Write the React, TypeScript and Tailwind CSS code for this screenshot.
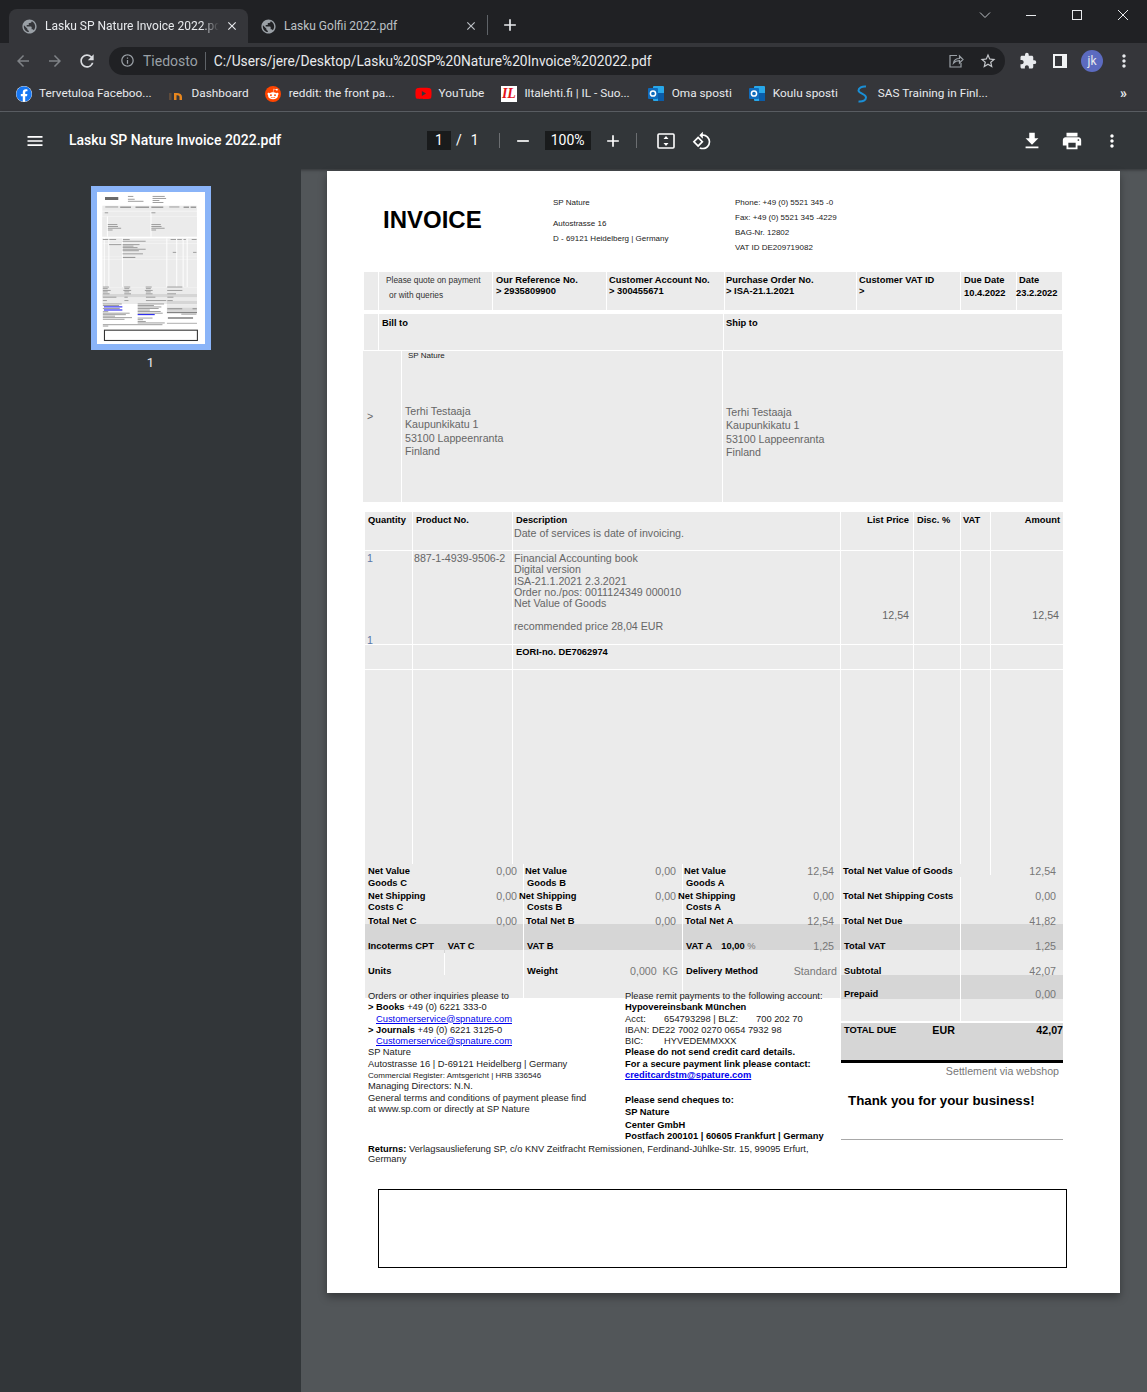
import React from 'react';
import {
  MdAdd,
  MdArrowBack,
  MdArrowForward,
  MdClose,
  MdExtension,
  MdFileDownload,
  MdInfoOutline,
  MdMenu,
  MdMoreVert,
  MdPrint,
  MdPublic,
  MdRefresh,
  MdRemove,
  MdRotate90DegreesCcw,
  MdStarBorder,
} from 'react-icons/md';
import { FaFacebook, FaRedditAlien, FaYoutube } from 'react-icons/fa';

const chromeFont = "font-['Roboto',sans-serif]";

function OutlookIcon() {
  return (
    <svg width="17" height="17" viewBox="0 0 17 17" className="shrink-0">
      <rect x="5" y="1" width="11" height="15" rx="1" fill="#28a8ea" />
      <rect x="10" y="8" width="6" height="8" fill="#0a5ca8" />
      <rect x="0" y="3" width="10" height="11" rx="1" fill="#0f6cbd" />
      <circle cx="5" cy="8.5" r="2.6" fill="none" stroke="#fff" strokeWidth="1.5" />
    </svg>
  );
}

function Bookmark({ icon, label, className = '' }: { icon: React.ReactNode; label: string; className?: string }) {
  return (
    <div className={`flex items-center gap-[7px] ${className}`}>
      <div className="flex h-4 w-[17px] shrink-0 items-center justify-center">{icon}</div>
      <span className="whitespace-nowrap text-[11.8px] text-[#e8eaed]">{label}</span>
    </div>
  );
}

function TitleBar() {
  return (
    <div className="flex h-[43px] items-end bg-[#202124] pl-[9px] text-[12px]">
      <div className="flex h-[34px] w-[239px] items-center rounded-t-lg bg-[#35363a] pl-[12px] pr-[9px]">
        <MdPublic className="shrink-0 text-[#9aa0a6]" size={17} />
        <span className="ml-[7px] w-[174px] overflow-hidden whitespace-nowrap text-[#e8eaed] [mask-image:linear-gradient(to_right,black_90%,transparent)]">
          Lasku SP Nature Invoice 2022.pdf
        </span>
        <MdClose className="ml-auto text-[#e8eaed]" size={14} />
      </div>
      <div className="flex h-[34px] w-[239px] items-center pl-[12px] pr-[9px]">
        <MdPublic className="shrink-0 text-[#9aa0a6]" size={17} />
        <span className="ml-[7px] whitespace-nowrap text-[#bdc1c6]">Lasku Golfii 2022.pdf</span>
        <MdClose className="ml-auto text-[#bdc1c6]" size={14} />
      </div>
      <div className="mb-[8px] h-[20px] w-px bg-[#5f6368]" />
      <MdAdd className="mb-[8px] ml-[12px] text-[#e8eaed]" size={20} />
      <div className="mb-auto ml-auto mt-[8px] flex items-center">
        <svg width="14" height="14" viewBox="0 0 14 14" className="mr-[32px] text-[#bdc1c6]" fill="none" stroke="currentColor">
          <path d="M2 4.5l5 5 5-5" />
        </svg>
        <svg width="14" height="14" viewBox="0 0 14 14" className="mr-[32px] text-[#e8eaed]" fill="none" stroke="currentColor">
          <path d="M2 7.5h10" />
        </svg>
        <svg width="14" height="14" viewBox="0 0 14 14" className="mr-[32px] text-[#e8eaed]" fill="none" stroke="currentColor">
          <rect x="2.5" y="2.5" width="9" height="9" />
        </svg>
        <svg width="14" height="14" viewBox="0 0 14 14" className="mr-[17px] text-[#e8eaed]" fill="none" stroke="currentColor">
          <path d="M2 2l10 10M12 2L2 12" />
        </svg>
      </div>
    </div>
  );
}

function AddressBar() {
  return (
    <div className="flex h-[35px] items-center bg-[#35363a] pl-[14px]">
      <MdArrowBack className="text-[#7f8286]" size={18} />
      <MdArrowForward className="ml-[14px] text-[#7f8286]" size={18} />
      <MdRefresh className="ml-[13px] text-[#dadce0]" size={20} />
      <div className="ml-[12px] flex h-[28px] w-[896px] items-center rounded-full bg-[#202124] pl-[11px] pr-[8px]">
        <MdInfoOutline className="text-[#9aa0a6]" size={15} />
        <span className="ml-[8px] pt-px text-[14px] text-[#9aa0a6]">Tiedosto</span>
        <div className="ml-[7px] h-[18px] w-px bg-[#5f6368]" />
        <span className="ml-[8px] whitespace-nowrap pt-px text-[13.75px] text-[#e8eaed]">C:/Users/jere/Desktop/Lasku%20SP%20Nature%20Invoice%202022.pdf</span>
        <svg width="16" height="16" viewBox="0 0 16 16" fill="none" stroke="#9aa0a6" strokeWidth="1.2" className="ml-auto">
          <path d="M9 2.5h-7v11.5h11v-4" />
          <path d="M5.5 10c.5-3 3-4.5 6-4.5V3l3.5 3.5-3.5 3.5V7.6c-2.5 0-4.5.6-6 2.4z" />
        </svg>
        <MdStarBorder className="ml-[15px] text-[#c4c7cb]" size={18} />
      </div>
      <MdExtension className="ml-[14px] text-[#e8eaed]" size={18} />
      <svg width="14" height="14" viewBox="0 0 14 14" className="ml-[16px]">
        <rect width="14" height="14" fill="#f1f3f4" />
        <rect x="2" y="2" width="7" height="10" fill="#35363a" />
      </svg>
      <div className="ml-[14px] flex h-[22px] w-[22px] items-center justify-center rounded-full bg-[#5c6bc0] text-[12px] text-[#e8eaed]">jk</div>
      <MdMoreVert className="ml-[11px] text-[#e8eaed]" size={20} />
    </div>
  );
}

function BookmarksBar() {
  return (
    <div className="flex h-[34px] items-center gap-[16px] border-b border-[#5f6368] bg-[#35363a] pb-[2px] pl-[15px]">
      <Bookmark label="Tervetuloa Faceboo..." icon={<FaFacebook className="rounded-full bg-white text-[#1877f2]" size={16} />} />
      <Bookmark
        label="Dashboard"
        icon={
          <svg width="16" height="12" viewBox="0 0 16 12">
            <rect x="1" y="5" width="2.5" height="7" fill="#5f4b3a" />
            <path d="M6 12V5h2.5c3.5 0 5.5 1.5 5.5 4v3h-2.5V9c0-1-.8-1.8-2-1.8h-1V12z" fill="#e8871e" />
          </svg>
        }
      />
      <Bookmark
        label="reddit: the front pa..."
        icon={
          <div className="flex h-4 w-4 items-center justify-center rounded-full bg-[#ff4500]">
            <FaRedditAlien className="text-white" size={12} />
          </div>
        }
      />
      <Bookmark className="ml-[4px]" label="YouTube" icon={<FaYoutube className="text-[#ff0000]" size={17} />} />
      <Bookmark
        label="Iltalehti.fi | IL - Suo..."
        icon={
          <div className="flex h-4 w-4 items-center justify-center bg-white font-['Liberation_Serif',serif] text-[14px] font-bold italic leading-none text-[#e2131a]">
            IL
          </div>
        }
      />
      <Bookmark className="ml-[2px]" label="Oma sposti" icon={<OutlookIcon />} />
      <Bookmark className="ml-px" label="Koulu sposti" icon={<OutlookIcon />} />
      <Bookmark
        label="SAS Training in Finl..."
        icon={
          <svg width="12" height="18" viewBox="0 0 12 18" fill="none" stroke="#1a8fd6" strokeWidth="2">
            <path d="M10 1.5C6 1 2.5 3 2.5 5.5 2.5 8.5 10 9 10 12.5c0 2.5-3 4.5-7.5 4" />
          </svg>
        }
      />
      <span className="ml-auto mr-[20px] text-[14px] font-bold text-[#e8eaed]">»</span>
    </div>
  );
}

function PdfToolbar() {
  return (
    <div className="flex h-[57px] items-center bg-[#323639] pl-[25px] font-['Roboto',sans-serif] text-[14px] text-white shadow-[0_1px_3px_rgba(0,0,0,0.4)]">
      <MdMenu size={20} />
      <span className="ml-[24px] w-[358px] whitespace-nowrap font-medium">Lasku SP Nature Invoice 2022.pdf</span>
      <div className="flex h-[19px] w-[24px] items-center justify-center bg-[#191b1c]">1</div>
      <span className="ml-[5px]">/</span>
      <span className="ml-[9px]">1</span>
      <div className="ml-[20px] h-[15px] w-px bg-[#6b6e71]" />
      <MdRemove className="ml-[13px]" size={20} />
      <div className="ml-[12px] flex h-[19px] w-[46px] items-center justify-center bg-[#191b1c]">100%</div>
      <MdAdd className="ml-[12px]" size={20} />
      <div className="ml-[13px] h-[15px] w-px bg-[#6b6e71]" />
      <svg width="18" height="16" viewBox="0 0 18 16" className="ml-[20px]" fill="none">
        <rect x="1" y="1" width="16" height="14" rx="1" stroke="#fff" strokeWidth="1.6" />
        <path d="M9 3l2.5 3h-5zM9 13l2.5-3h-5z" fill="#fff" />
      </svg>
      <MdRotate90DegreesCcw className="ml-[17px]" size={20} />
      <MdFileDownload className="ml-[309px]" size={22} />
      <MdPrint className="ml-[18px]" size={22} />
      <MdMoreVert className="ml-[19px]" size={20} />
    </div>
  );
}

// screen coordinates, so the thumbnail shares its numbers with the page
const thumbGray = [
  [364, 272, 698, 38], [364, 314, 698, 36], [363, 351, 700, 150], [365, 512, 698, 13], [365, 527, 698, 23],
  [365, 551, 698, 93], [365, 645, 698, 24], [365, 670, 698, 204], [365, 875, 698, 49], [365, 950, 698, 48],
  [841, 999, 222, 22],
];
const thumbDark = [[365, 924, 698, 25], [841, 975, 222, 23], [841, 1023, 222, 37]];
const thumbText = [
  [553, 200, 40, 4], [553, 221, 50, 4], [553, 236, 115, 4], [735, 200, 90, 4], [735, 215, 100, 4], [735, 230, 50, 4], [735, 245, 80, 4],
  [386, 278, 95, 4], [496, 278, 80, 8], [609, 278, 100, 8], [726, 278, 88, 8], [858, 278, 75, 4], [964, 278, 40, 8], [1016, 278, 40, 8],
  [382, 321, 25, 4], [726, 321, 30, 4], [405, 408, 70, 4], [405, 422, 75, 4], [405, 435, 98, 4], [405, 448, 35, 4],
  [726, 408, 70, 4], [726, 422, 75, 4], [726, 435, 98, 4], [726, 448, 35, 4], [368, 518, 40, 4], [416, 518, 50, 4], [516, 518, 50, 4],
  [868, 518, 40, 4], [917, 518, 34, 4], [963, 518, 18, 4], [1024, 518, 36, 4], [514, 531, 170, 4], [414, 556, 90, 4], [514, 556, 125, 4],
  [514, 567, 80, 4], [514, 578, 110, 4], [514, 590, 170, 4], [514, 601, 120, 4], [514, 624, 150, 4], [884, 613, 25, 4], [1034, 613, 25, 4],
  [516, 650, 92, 5], [368, 869, 45, 4], [525, 869, 45, 4], [684, 869, 45, 4], [843, 869, 112, 4], [368, 881, 36, 4], [527, 881, 36, 4],
  [686, 881, 36, 4], [368, 894, 58, 4], [519, 894, 58, 4], [678, 894, 58, 4], [843, 894, 112, 4], [368, 905, 36, 4], [527, 905, 36, 4],
  [686, 905, 36, 4], [368, 919, 50, 4], [526, 919, 50, 4], [685, 919, 50, 4], [843, 919, 65, 4], [368, 944, 100, 4], [527, 944, 25, 4],
  [686, 944, 70, 4], [844, 944, 45, 4], [368, 969, 30, 4], [527, 969, 30, 4], [686, 969, 150, 4], [844, 969, 40, 4], [368, 994, 140, 4],
  [625, 994, 195, 4], [844, 1028, 110, 6], [1030, 1028, 32, 6], [368, 1005, 120, 4], [368, 1028, 125, 4], [368, 1051, 40, 4], [368, 1062, 198, 4],
  [368, 1073, 170, 4], [368, 1084, 90, 4], [368, 1095, 215, 4], [368, 1107, 160, 4], [625, 1005, 120, 4], [625, 1016, 175, 4], [625, 1027, 155, 4],
  [625, 1039, 90, 4], [625, 1050, 170, 4], [625, 1062, 185, 4], [625, 1098, 110, 4], [625, 1110, 40, 4], [625, 1123, 60, 4], [625, 1134, 200, 4],
  [848, 1094, 186, 11], [947, 1069, 112, 4], [368, 1147, 440, 4], [368, 1157, 40, 4],
];
const thumbBlue = [[376, 1015, 136, 5], [376, 1038, 136, 5], [625, 1072, 126, 5]];

function Thumbnail() {
  return (
    <div className="mt-[17px] flex flex-col items-center">
      <div className="border-[6px] border-[#8ab4f8]">
        <svg width="108" height="152" viewBox="327 171 793 1122" className="block bg-white">
          {thumbGray.map(([x, y, w, h], i) => (
            <rect key={i} x={x} y={y} width={w} height={h} fill="#ebebeb" />
          ))}
          {thumbDark.map(([x, y, w, h], i) => (
            <rect key={i} x={x} y={y} width={w} height={h} fill="#d6d6d6" />
          ))}
          {[379, 413, 513, 841, 914, 961, 991].map((x) => (
            <rect key={x} x={x - 4} y={512} width={7} height={360} fill="#fff" />
          ))}
          <rect x="720" y="314" width="7" height="188" fill="#fff" />
          <rect x="398" y="351" width="7" height="150" fill="#fff" />
          <rect x="356" y="505" width="720" height="7" fill="#fff" />
          {thumbText.map(([x, y, w, h], i) => (
            <rect key={i} x={x} y={y} width={w} height={h + 3} fill="#9a9a9a" />
          ))}
          <rect x="384" y="208" width="98" height="22" fill="#6a6a6a" />
          {thumbBlue.map(([x, y, w, h], i) => (
            <rect key={i} x={x} y={y} width={w} height={h + 3} fill="#2222ee" />
          ))}
          <rect x="841" y="1060" width="222" height="5" fill="#333" />
          <rect x="841" y="1137" width="222" height="5" fill="#888" />
          <rect x="380" y="1191" width="686" height="76" fill="#fff" stroke="#333" strokeWidth="8" />
        </svg>
      </div>
      <span className="mt-[3px] font-['Roboto',sans-serif] text-[13px] text-[#e8eaed]">1</span>
    </div>
  );
}

// label + value on one baseline, used across the totals block. relative keeps
// the text above the next row's cell background, it runs over those in the pdf
function Line({ label, value, className = '', lead = 'leading-[14px]' }: { label?: React.ReactNode; value?: string; className?: string; lead?: string }) {
  return (
    <div className={`relative flex justify-between whitespace-nowrap ${lead} ${className}`}>
      <span className="text-[9.33px] font-bold text-black">{label}</span>
      {value && <span className="text-[10.67px] text-[#777]">{value}</span>}
    </div>
  );
}

const summaryCols = 'grid grid-cols-[158px_158px_157px_119px_102px] gap-x-px';
const tableCols = 'grid grid-cols-[47px_99px_327px_72px_46px_29px_72px] gap-x-px';

function ItemsTable() {
  return (
    <div className="ml-px mt-[10px] w-[698px]">
      <div className={`${tableCols} h-[13px] text-[9.33px] font-bold leading-[16px] text-black`}>
        <div className="bg-[#ebebeb] pl-[3px]">Quantity</div>
        <div className="bg-[#ebebeb] pl-[3px]">Product No.</div>
        <div className="bg-[#ebebeb] pl-[3px]">Description</div>
        <div className="bg-[#ebebeb] pr-[4px] text-right">List Price</div>
        <div className="bg-[#ebebeb] pl-[3px]">Disc. %</div>
        <div className="bg-[#ebebeb] pl-[2px]">VAT</div>
        <div className="bg-[#ebebeb] pr-[3px] text-right">Amount</div>
      </div>
      <div className={`${tableCols} mt-[2px] h-[23px] text-[10.67px] leading-[12px] text-[#666]`}>
        <div className="bg-[#ebebeb]" />
        <div className="bg-[#ebebeb]" />
        <div className="bg-[#ebebeb] pl-px">Date of services is date of invoicing.</div>
        <div className="bg-[#ebebeb]" />
        <div className="bg-[#ebebeb]" />
        <div className="bg-[#ebebeb]" />
        <div className="bg-[#ebebeb]" />
      </div>
      <div className={`${tableCols} mt-px h-[93px] text-[10.67px] leading-[11.3px] text-[#666]`}>
        <div className="flex flex-col justify-between bg-[#ebebeb] pl-[2px] pt-[2px] text-[#5a78a8]">
          <span>1</span>
          <span className="-mb-[2px]">1</span>
        </div>
        <div className="whitespace-nowrap bg-[#ebebeb] pl-px pt-[2px]">887-1-4939-9506-2</div>
        <div className="bg-[#ebebeb] pl-px pt-[2px]">
          <div>Financial Accounting book</div>
          <div>Digital version</div>
          <div>ISA-21.1.2021 2.3.2021</div>
          <div>Order no./pos: 0011124349 000010</div>
          <div>Net Value of Goods</div>
          <div className="mt-[11.3px]">recommended price 28,04 EUR</div>
        </div>
        <div className="bg-[#ebebeb] pr-[4px] pt-[59px] text-right">12,54</div>
        <div className="bg-[#ebebeb]" />
        <div className="bg-[#ebebeb]" />
        <div className="bg-[#ebebeb] pr-[4px] pt-[59px] text-right">12,54</div>
      </div>
      <div className={`${tableCols} mt-px h-[24px]`}>
        <div className="bg-[#ebebeb]" />
        <div className="bg-[#ebebeb]" />
        <div className="bg-[#ebebeb] pl-[3px] text-[9.33px] font-bold leading-[14px] text-black">EORI-no. DE7062974</div>
        <div className="bg-[#ebebeb]" />
        <div className="bg-[#ebebeb]" />
        <div className="bg-[#ebebeb]" />
        <div className="bg-[#ebebeb]" />
      </div>
      <div className={`${tableCols} mt-px h-[194px]`}>
        {[0, 1, 2, 3, 4, 5, 6].map((i) => (
          <div key={i} className="bg-[#ebebeb]" />
        ))}
      </div>
    </div>
  );
}

function Totals() {
  return (
    <div className="ml-px w-[698px]">
      <div className="grid h-[10px] grid-cols-[158px_158px_157px_72px_76px_72px] gap-x-px">
        <div className="bg-[#ebebeb] pl-[3px] pr-[6px] pt-px"><Line label="Net Value" value="0,00" lead="leading-[12px]" /></div>
        <div className="bg-[#ebebeb] pl-px pr-[6px] pt-px"><Line label="Net Value" value="0,00" lead="leading-[12px]" /></div>
        <div className="bg-[#ebebeb] pl-px pr-[6px] pt-px"><Line label="Net Value" value="12,54" lead="leading-[12px]" /></div>
        <div className="bg-[#ebebeb] pl-[2px] pt-px"><Line label="Total Net Value of Goods" lead="leading-[12px]" /></div>
        <div className="bg-[#ebebeb]" />
        <div className="bg-[#ebebeb] pr-[7px] pt-px"><Line value="12,54" lead="leading-[12px]" className="!justify-end" /></div>
      </div>
      <div className={`${summaryCols} mt-px h-[24px]`}>
        <div className="bg-[#ebebeb] pl-[3px] pr-[6px] pt-[2px]">
          <Line label="Goods C" lead="leading-[13px]" />
          <Line label="Net Shipping" value="0,00" lead="leading-[13px]" />
        </div>
        <div className="bg-[#ebebeb] pr-[6px] pt-[2px]">
          <Line label={<span className="ml-[3px]">Goods B</span>} lead="leading-[13px]" />
          <Line label={<span className="-ml-[5px]">Net Shipping</span>} value="0,00" lead="leading-[13px]" />
        </div>
        <div className="bg-[#ebebeb] pr-[6px] pt-[2px]">
          <Line label={<span className="ml-[3px]">Goods A</span>} lead="leading-[13px]" />
          <Line label={<span className="-ml-[5px]">Net Shipping</span>} value="0,00" lead="leading-[13px]" />
        </div>
        <div className="bg-[#ebebeb] pl-[2px] pt-[15px]"><Line label="Total Net Shipping Costs" lead="leading-[13px]" /></div>
        <div className="bg-[#ebebeb] pr-[7px] pt-[15px]"><Line value="0,00" lead="leading-[13px]" className="!justify-end" /></div>
      </div>
      <div className={`${summaryCols} mt-px h-[24px]`}>
        <div className="bg-[#ebebeb] pl-[3px] pr-[6px]">
          <Line label="Costs C" />
          <Line label="Total Net C" value="0,00" />
        </div>
        <div className="bg-[#ebebeb] pl-[2px] pr-[6px]">
          <Line label={<span className="ml-px">Costs B</span>} />
          <Line label="Total Net B" value="0,00" />
        </div>
        <div className="bg-[#ebebeb] pl-[2px] pr-[6px]">
          <Line label={<span className="ml-px">Costs A</span>} />
          <Line label="Total Net A" value="12,54" />
        </div>
        <div className="bg-[#ebebeb] pl-[2px] pt-[14px]"><Line label="Total Net Due" /></div>
        <div className="bg-[#ebebeb] pr-[7px] pt-[14px]"><Line value="41,82" className="!justify-end" /></div>
      </div>
      <div className={`${summaryCols} h-[25px]`}>
        <div className="bg-[#d6d6d6] pl-[3px] pt-[15px]"><Line label={<>Incoterms CPT<span className="ml-[14px]">VAT C</span></>} /></div>
        <div className="bg-[#d6d6d6] pl-[3px] pt-[15px]"><Line label="VAT B" /></div>
        <div className="bg-[#d6d6d6] pl-[3px] pr-[6px] pt-[15px]">
          <Line label={<>VAT A<span className="ml-[9px]">10,00 <span className="font-normal text-[#777]">%</span></span></>} value="1,25" />
        </div>
        <div className="bg-[#d6d6d6] pl-[3px] pt-[15px]"><Line label="Total VAT" /></div>
        <div className="bg-[#d6d6d6] pr-[7px] pt-[15px]"><Line value="1,25" className="!justify-end" /></div>
      </div>
      <div className={`${summaryCols} mt-px h-[24px]`}>
        <div className="grid grid-cols-[79px_78px] gap-x-px">
          <div className="bg-[#ebebeb] pl-[3px] pt-[14px]"><Line label="Units" /></div>
          <div className="bg-[#ebebeb]" />
        </div>
        <div className="bg-[#ebebeb] pl-[3px] pr-[4px] pt-[14px]"><Line label="Weight" value={'0,000\u00a0\u00a0KG'} /></div>
        <div className="bg-[#ebebeb] pl-[3px] pr-[3px] pt-[14px]"><Line label="Delivery Method" value="Standard" /></div>
        <div className="bg-[#ebebeb] pl-[3px] pt-[14px]"><Line label="Subtotal" /></div>
        <div className="bg-[#ebebeb] pr-[7px] pt-[14px]"><Line value="42,07" className="!justify-end" /></div>
      </div>
    </div>
  );
}

const link = 'text-[#0000ee] underline';

function FooterBlock() {
  return (
    <div className="ml-px mt-px flex w-[698px]">
      <div className="w-[475px]">
        <div className="grid h-[23px] grid-cols-[158px_158px_157px] gap-x-px">
          <div className="bg-[#ebebeb]" />
          <div className="bg-[#ebebeb]" />
          <div className="bg-[#ebebeb]" />
        </div>
        <div className="relative -mt-[7px] grid grid-cols-[260px_1fr] whitespace-nowrap text-[9.33px] leading-[11.3px] text-[#222]">
          <div className="pl-[3px]">
            <div>Orders or other inquiries please to</div>
            <div><b className="text-black">&gt; Books</b> +49 (0) 6221 333-0</div>
            <div className="pl-[8px]"><span className={link}>Customerservice@spnature.com</span></div>
            <div><b className="text-black">&gt; Journals</b> +49 (0) 6221 3125-0</div>
            <div className="pl-[8px]"><span className={link}>Customerservice@spnature.com</span></div>
            <div>SP Nature</div>
            <div>Autostrasse 16 | D-69121 Heidelberg | Germany</div>
            <div className="text-[8px]">Commercial Register: Amtsgericht | HRB 336546</div>
            <div>Managing Directors: N.N.</div>
            <div>General terms and conditions of payment please find</div>
            <div>at www.sp.com or directly at SP Nature</div>
          </div>
          <div>
            <div>Please remit payments to the following account:</div>
            <div className="font-bold text-black">Hypovereinsbank München</div>
            <div className="flex">
              <span className="w-[39px]">Acct:</span>
              <span className="w-[92px]">654793298 | BLZ:</span>
              <span>700 202 70</span>
            </div>
            <div>IBAN: DE22 7002 0270 0654 7932 98</div>
            <div className="flex">
              <span className="w-[39px]">BIC:</span>
              <span>HYVEDEMMXXX</span>
            </div>
            <div className="font-bold text-black">Please do not send credit card details.</div>
            <div className="font-bold text-black">For a secure payment link please contact:</div>
            <div className={`font-bold ${link}`}>creditcardstm@spature.com</div>
            <div className="mt-[14px] font-bold text-black">Please send cheques to:</div>
            <div className="font-bold text-black">SP Nature</div>
            <div className="mt-[2px] font-bold text-black">Center GmbH</div>
            <div className="font-bold text-black">Postfach 200101 | 60605 Frankfurt | Germany</div>
          </div>
        </div>
        <div className="relative mt-px w-[470px] pl-[3px] text-[9.33px] leading-[10px] text-[#222]">
          <b className="text-black">Returns:</b> Verlagsauslieferung SP, c/o KNV Zeitfracht Remissionen, Ferdinand-Jühlke-Str. 15, 99095 Erfurt, Germany
        </div>
      </div>
      <div className="ml-px w-[222px]">
        <div className="grid h-[22px] grid-cols-[119px_102px] gap-x-px">
          <div className="bg-[#d6d6d6] pl-[3px] pt-[13px]"><Line label="Prepaid" lead="leading-[12px]" /></div>
          <div className="bg-[#d6d6d6] pr-[7px] pt-[13px]"><Line value="0,00" lead="leading-[12px]" className="!justify-end" /></div>
        </div>
        <div className="mt-[2px] grid h-[22px] grid-cols-[119px_102px] gap-x-px">
          <div className="bg-[#ebebeb]" />
          <div className="bg-[#ebebeb]" />
        </div>
        <div className="mt-[2px] flex h-[37px] bg-[#d6d6d6] pl-[3px] text-[9.33px] font-bold leading-[14px] text-black">
          <span>TOTAL DUE</span>
          <span className="ml-[36px] text-[10.67px]">EUR</span>
          <span className="ml-auto text-[10.67px]">42,07</span>
        </div>
        <div className="h-[3px] bg-black" />
        <div className="mt-[2px] pr-[4px] text-right text-[10.67px] leading-[12px] text-[#777]">Settlement via webshop</div>
        <div className="mt-[16px] pl-[7px] text-[13.33px] font-bold leading-[16px] text-black">Thank you for your business!</div>
        <div className="mt-[30px] h-px bg-[#a8a8a8]" />
      </div>
    </div>
  );
}

function InvoicePage() {
  return (
    <div className="h-[1122px] w-[793px] bg-white pl-[37px] font-['Liberation_Sans',Arial,sans-serif] shadow-[0_4px_8px_rgba(0,0,0,0.35)]">
      <div className="flex h-[101px] text-[8px] text-[#222]">
        <div className="w-[189px] pl-[19px] pt-[35px] text-[24px] font-bold leading-[28px] text-black">INVOICE</div>
        <div className="w-[182px] pt-[24px] leading-[15px]">
          <div>SP Nature</div>
          <div className="mt-[6px]">Autostrasse 16</div>
          <div>D - 69121 Heidelberg | Germany</div>
        </div>
        <div className="pt-[24px] leading-[15px]">
          <div>Phone: +49 (0) 5521 345 -0</div>
          <div>Fax: +49 (0) 5521 345 -4229</div>
          <div>BAG-Nr. 12802</div>
          <div>VAT ID DE209719082</div>
        </div>
      </div>

      <div className="grid h-[38px] w-[698px] grid-cols-[14px_113px_113px_117px_131px_103px_55px_45px] gap-x-px text-[9.33px] font-bold leading-[11px] text-black">
        <div className="bg-[#ebebeb]" />
        <div className="whitespace-nowrap bg-[#ebebeb] pt-px text-[8.33px] font-normal leading-[15px] text-[#333]">
          <div className="pl-[7px]">Please quote on payment</div>
          <div className="pl-[10px]">or with queries</div>
        </div>
        <div className="bg-[#ebebeb] pl-[3px] pt-[3px]">
          <div>Our Reference No.</div>
          <div>&gt; 2935809900</div>
        </div>
        <div className="bg-[#ebebeb] pl-[2px] pt-[3px]">
          <div className="whitespace-nowrap">Customer Account No.</div>
          <div>&gt; 300455671</div>
        </div>
        <div className="bg-[#ebebeb] pl-px pt-[3px]">
          <div>Purchase Order No.</div>
          <div>&gt; ISA-21.1.2021</div>
        </div>
        <div className="bg-[#ebebeb] pl-[2px] pt-[3px]">
          <div>Customer VAT ID</div>
          <div>&gt;</div>
        </div>
        <div className="bg-[#ebebeb] pl-[3px] pt-[3px]">
          <div>Due Date</div>
          <div className="mt-[2px]">10.4.2022</div>
        </div>
        <div className="bg-[#ebebeb] pt-[3px]">
          <div className="pl-[2px]">Date</div>
          <div className="-ml-px mt-[2px]">23.2.2022</div>
        </div>
      </div>

      <div className="mt-[4px] grid h-[36px] w-[698px] grid-cols-[14px_344px_338px] gap-x-px text-[9.33px] font-bold leading-[11px] text-black">
        <div className="bg-[#ebebeb]" />
        <div className="bg-[#ebebeb] pl-[3px] pt-[4px]">Bill to</div>
        <div className="bg-[#ebebeb] pl-[2px] pt-[4px]">Ship to</div>
      </div>

      <div className="-ml-px mt-px grid h-[151px] w-[700px] grid-cols-[38px_320px_340px] gap-x-px text-[10.67px] leading-[13.3px] text-[#666]">
        <div className="bg-[#ebebeb] pl-[4px] pt-[59px]">&gt;</div>
        <div className="bg-[#ebebeb] pl-[3px]">
          <div className="pl-[3px] text-[8px] leading-[10px] text-[#222]">SP Nature</div>
          <div className="mt-[44px]">
            <div>Terhi Testaaja</div>
            <div>Kaupunkikatu 1</div>
            <div>53100 Lappeenranta</div>
            <div>Finland</div>
          </div>
        </div>
        <div className="bg-[#ebebeb] pl-[3px] pt-[55px]">
          <div>Terhi Testaaja</div>
          <div>Kaupunkikatu 1</div>
          <div>53100 Lappeenranta</div>
          <div>Finland</div>
        </div>
      </div>

      <ItemsTable />
      <Totals />
      <FooterBlock />

      <div className="ml-[14px] mt-[25px] h-[79px] w-[689px] border border-black" />
    </div>
  );
}

export default function App() {
  return (
    <div className="flex h-[1392px] w-[1147px] flex-col overflow-hidden bg-[#525659]">
      <div className={chromeFont}>
        <TitleBar />
        <AddressBar />
        <BookmarksBar />
      </div>
      <PdfToolbar />
      <div className="flex min-h-0 flex-1">
        <div className="w-[301px] shrink-0 bg-[#323639]">
          <Thumbnail />
        </div>
        <div className="flex-1 pl-[26px] pt-[2px]">
          <InvoicePage />
        </div>
      </div>
    </div>
  );
}
